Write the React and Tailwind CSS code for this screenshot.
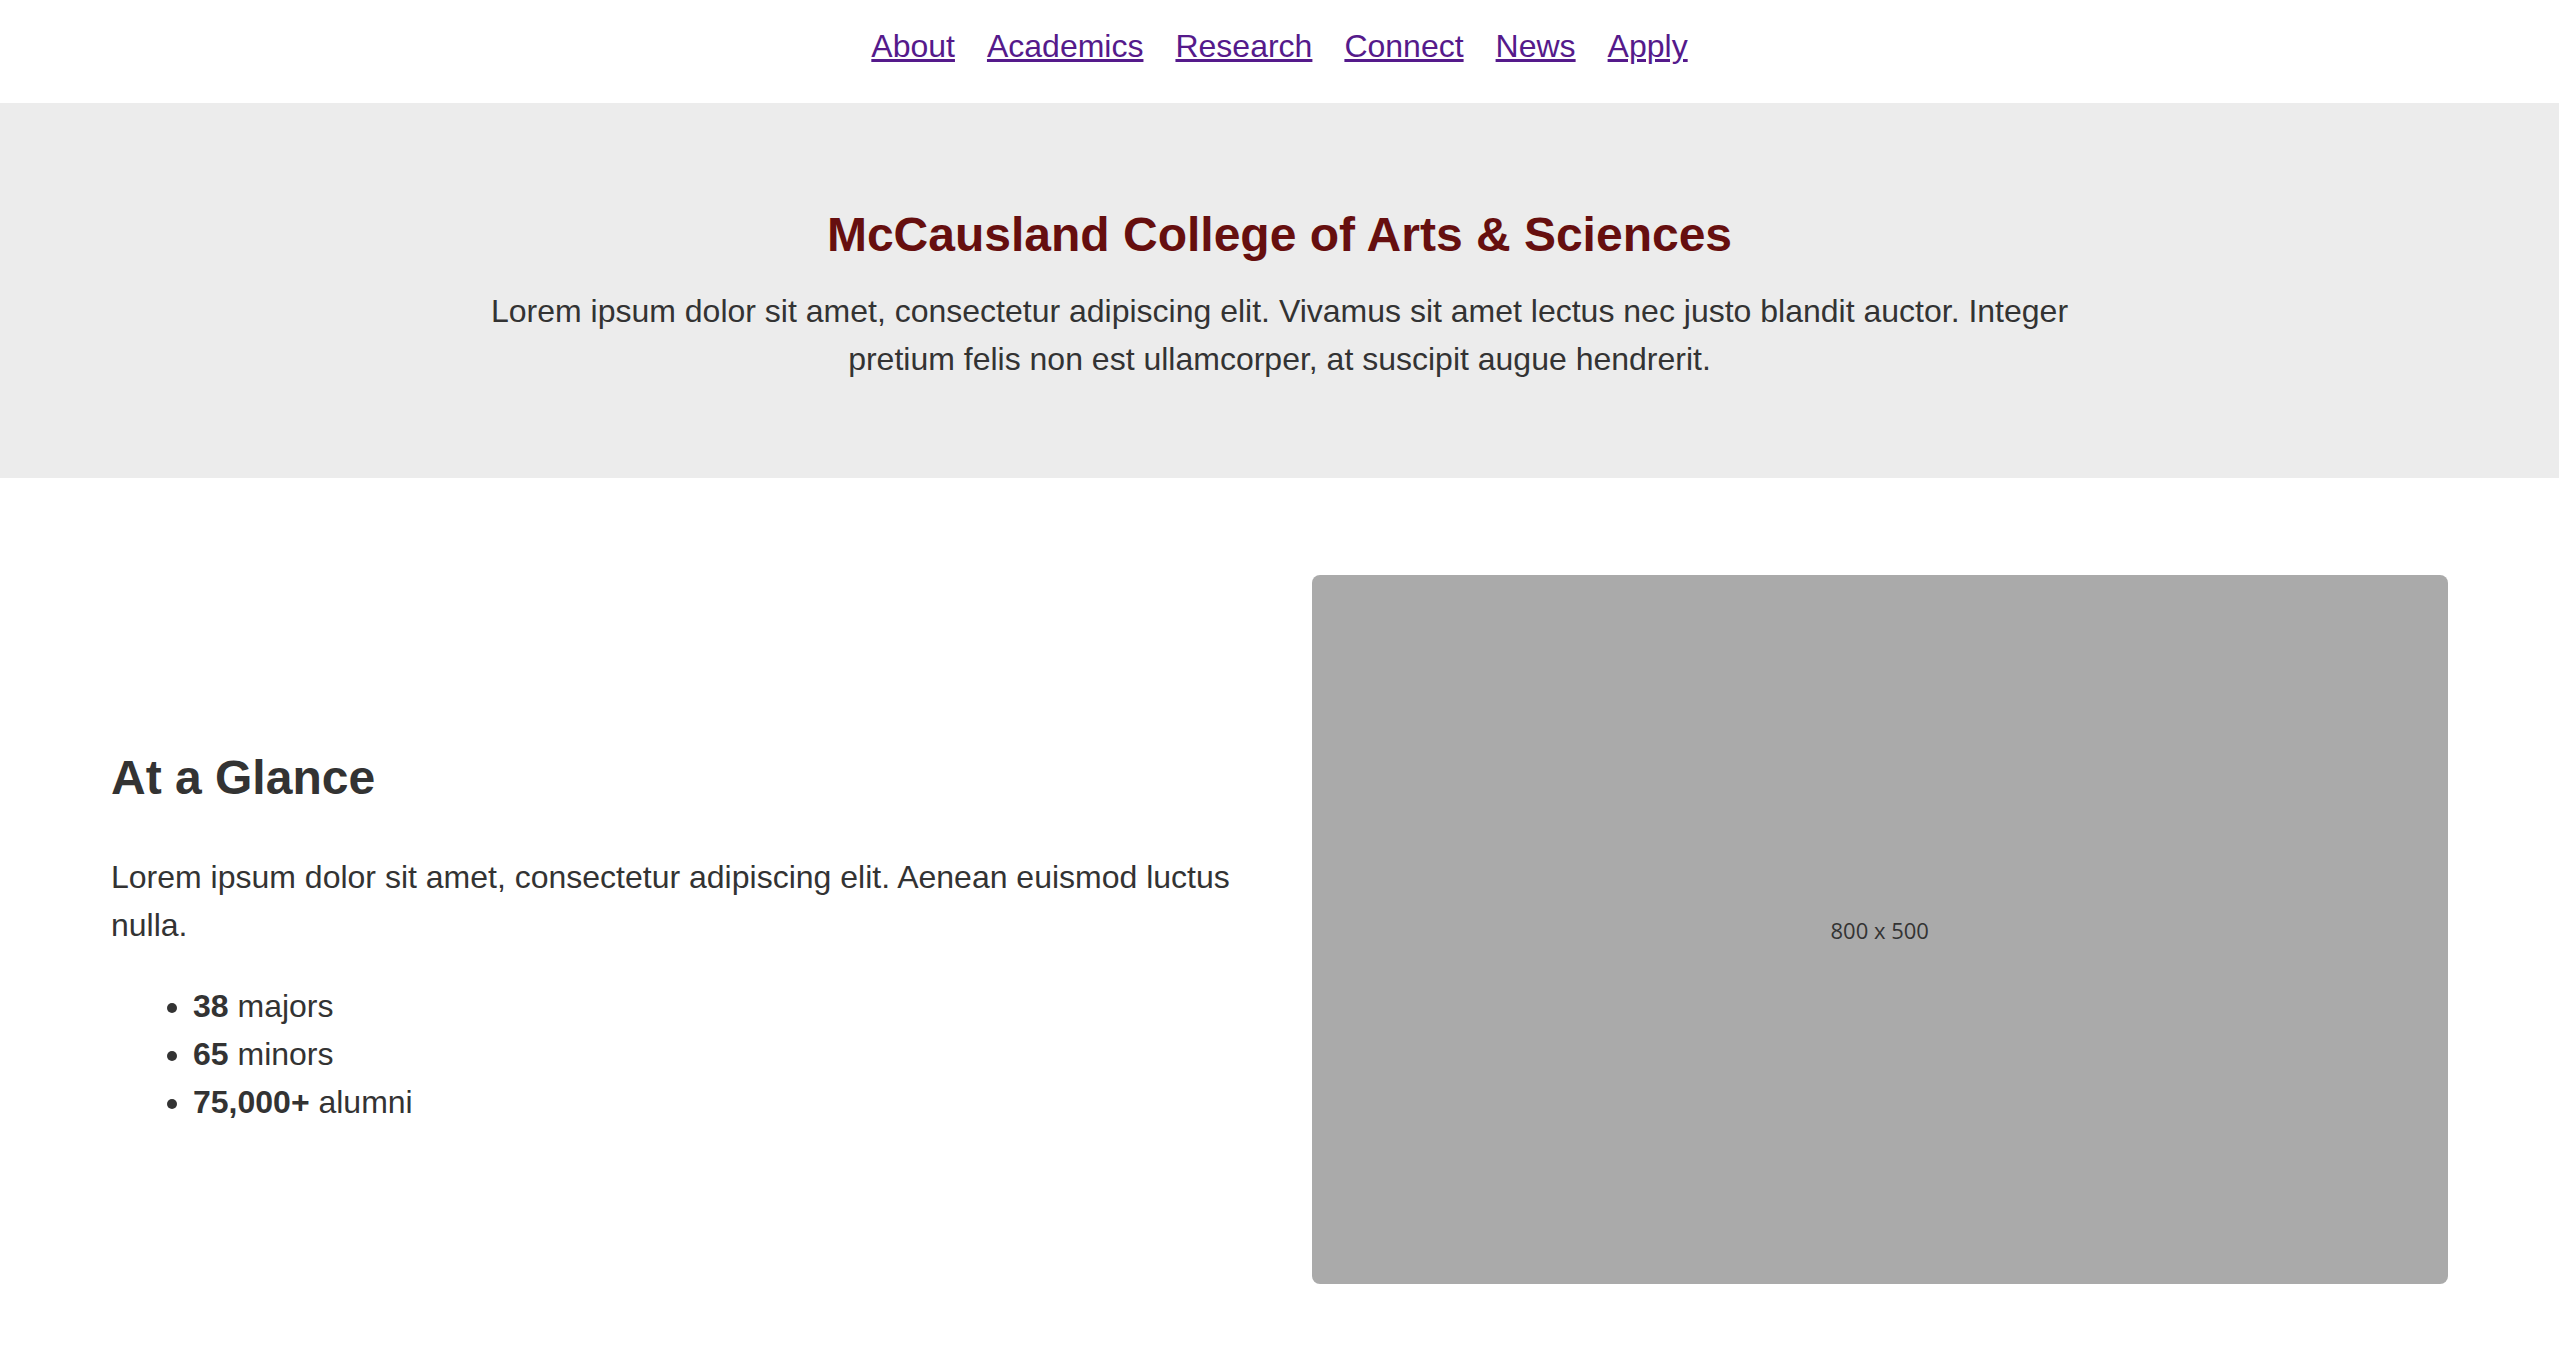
import React from 'react';

const links = ['About', 'Academics', 'Research', 'Connect', 'News', 'Apply'];

const stats = [
  { num: '38', label: 'majors' },
  { num: '65', label: 'minors' },
  { num: '75,000+', label: 'alumni' },
];

export default function App() {
  return (
    <div className="min-h-screen bg-white text-[#333] text-[32px] leading-[48px] font-['Liberation_Sans',Arial,sans-serif]">
      <nav className="flex justify-center gap-[32px] pt-[27px] pb-[37px] leading-[39px]">
        {links.map(link => (
          <a key={link} href="#" className="text-[#551a8b] underline">
            {link}
          </a>
        ))}
      </nav>

      <header className="bg-[#ececec] pt-[98px] pb-[95px] px-[111px] text-center">
        <h1 className="text-[48px] leading-[67px] font-bold text-[#660f0f]">
          McCausland College of Arts &amp; Sciences
        </h1>
        <p className="mt-[19px] max-w-[1600px] mx-auto">
          Lorem ipsum dolor sit amet, consectetur adipiscing elit. Vivamus sit amet lectus nec justo blandit auctor. Integer pretium felis non est ullamcorper, at suscipit augue hendrerit.
        </p>
      </header>

      <section className="grid grid-cols-2 gap-[64px] items-center px-[111px] pt-[97px] pb-[96px]">
        <div className="pt-[16px]">
          <h2 className="text-[48px] leading-[58px] font-bold mb-[46px]">At a Glance</h2>
          <p className="mb-[33px]">
            Lorem ipsum dolor sit amet, consectetur adipiscing elit. Aenean euismod luctus nulla.
          </p>
          <ul className="list-disc pl-[82px]">
            {stats.map(s => (
              <li key={s.label}>
                <strong className="font-bold">{s.num}</strong> {s.label}
              </li>
            ))}
          </ul>
        </div>

        <div className="h-[709px] rounded-[8px] bg-[#aaaaaa] flex items-center justify-center">
          <span className="text-[22px] leading-none text-[#333] font-['Open_Sans',sans-serif]">800 x 500</span>
        </div>
      </section>
    </div>
  );
}
